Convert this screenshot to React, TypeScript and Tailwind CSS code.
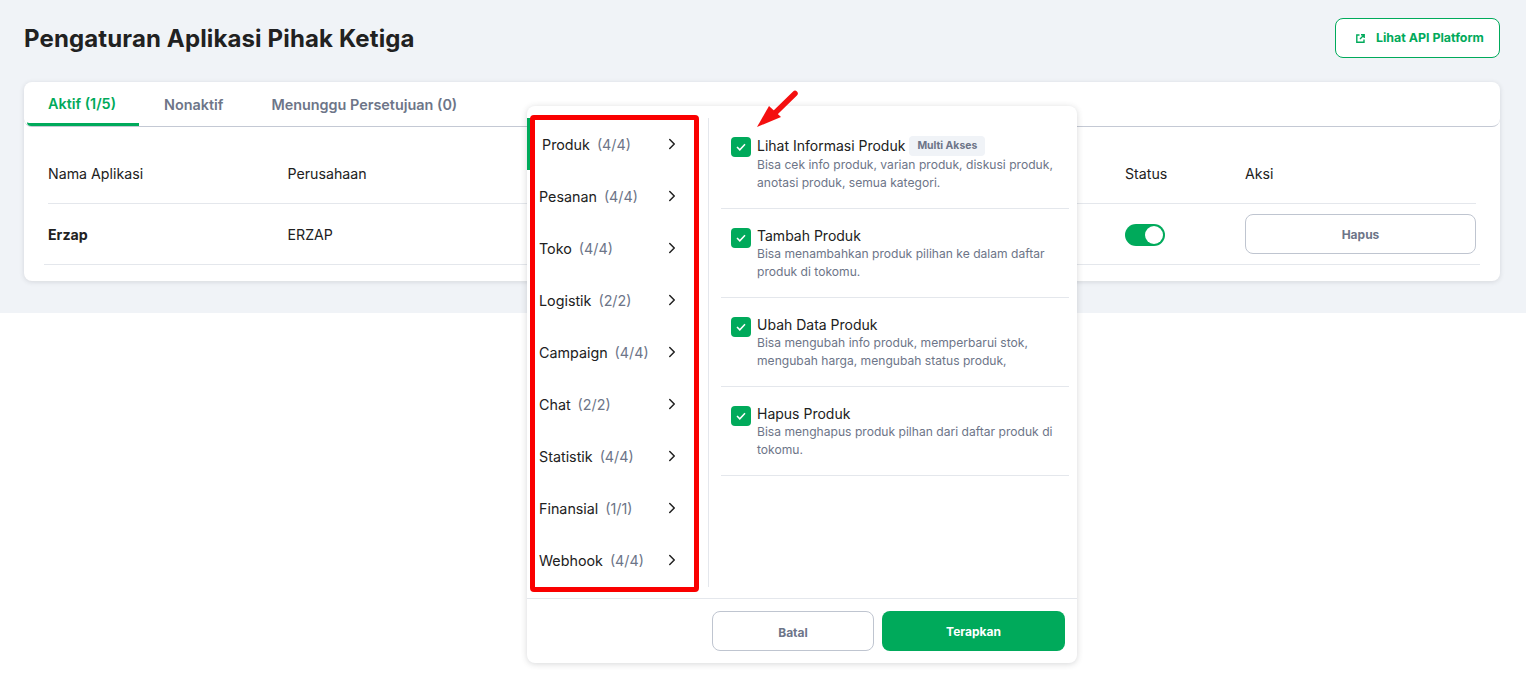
import React from 'react';
import {ChevronRight} from 'lucide-react';

const menus = [
    {title: "Produk", count: "(4/4)", active: true},
    {title: "Pesanan", count: "(4/4)"},
    {title: "Toko", count: "(4/4)"},
    {title: "Logistik", count: "(2/2)"},
    {title: "Campaign", count: "(4/4)"},
    {title: "Chat", count: "(2/2)"},
    {title: "Statistik", count: "(4/4)"},
    {title: "Finansial", count: "(1/1)"},
    {title: "Webhook", count: "(4/4)"},
];

const permissions = [
    {title: "Lihat Informasi Produk", badge: true, desc: ["Bisa cek info produk, varian produk, diskusi produk,", "anotasi produk, semua kategori."]},
    {title: "Tambah Produk", desc: ["Bisa menambahkan produk pilihan ke dalam daftar", "produk di tokomu."]},
    {title: "Ubah Data Produk", desc: ["Bisa mengubah info produk, memperbarui stok,", "mengubah harga, mengubah status produk,"]},
    {title: "Hapus Produk", desc: ["Bisa menghapus produk pilhan dari daftar produk di", "tokomu."]},
];

const App = () => {
    return (
        <div className="relative min-h-[689px] bg-white font-['Inter',sans-serif] text-[#212121]">
            <div className="h-[313px] bg-[#f0f3f7] pt-[18px] pr-[26px] pl-6">
                <div className="flex h-10 items-center justify-between">
                    <h1 className="pt-[1px] text-[24px] font-bold tracking-[0.13px]">Pengaturan Aplikasi Pihak Ketiga</h1>
                    <button className="flex h-10 w-[165px] items-center gap-[11px] rounded-lg border border-[#00aa5b] bg-white pt-[1px] pl-5 text-[12.4px] font-bold text-[#00aa5b]">
                        <svg className="-mt-[1px]" width="9" height="9" viewBox="0 0 9 9" fill="none" stroke="#00aa5b" strokeWidth="1.4">
                            <path d="M3.5 1H.8v7.2H8V5.5" />
                            <path d="M5 .8h3.2V4M8 1 4 5" />
                        </svg>
                        Lihat API Platform
                    </button>
                </div>
                <div className="mt-6 h-[199px] rounded-lg bg-white shadow-[0_1px_5px_rgba(49,53,59,0.14)]">
                    <div className="flex h-[45px] rounded-b-lg border-b border-[#c4c9d4] pl-[3px] text-[14.4px] font-semibold text-[#6d7588]">
                        <div className="flex h-[44px] w-[112px] items-center justify-center rounded-bl-sm border-b-[3px] border-[#00aa5b] pt-[3px] pr-[2px] text-[#00aa5b]">Aktif (1/5)</div>
                        <div className="ml-[25px] flex h-[44px] items-center pt-[1px]">Nonaktif</div>
                        <div className="ml-[48px] flex h-[44px] items-center pt-[1px]">Menunggu Persetujuan (0)</div>
                    </div>
                    <div className="px-5 text-[14.2px]">
                        <div className="mx-1 flex h-[77px] items-center border-b border-[#e4e7ec] pt-[18px]">
                            <div className="w-[239.5px]">Nama Aplikasi</div>
                            <div className="w-[837.5px]">Perusahaan</div>
                            <div className="w-[120px]">Status</div>
                            <div>Aksi</div>
                        </div>
                        <div className="flex h-[61px] items-center border-b border-[#e4e7ec] pl-1 pr-1">
                            <div className="w-[239.5px] pt-[2px] font-bold">Erzap</div>
                            <div className="w-[837.5px] pt-[2px]">ERZAP</div>
                            <div className="w-[120px]">
                                <div className="mt-[2px] flex h-[22px] w-10 items-center justify-end rounded-full bg-[#00aa5b] pr-[2px]">
                                    <div className="h-[18px] w-[18px] rounded-full bg-white" />
                                </div>
                            </div>
                            <button className="h-10 w-[231px] rounded-lg border border-[#bfc5d0] bg-white pt-[2px] text-[12px] font-bold text-[#6d7588]">Hapus</button>
                        </div>
                    </div>
                </div>
            </div>

            {/* modal */}
            <div className="absolute top-[106px] left-[527px] flex h-[557px] w-[550px] flex-col rounded-lg bg-white shadow-[0_1px_6px_rgba(49,53,59,0.2)]">
                <div className="flex h-[492px] pt-3">
                    <div className="h-[469px] w-[182px] border-r border-[#e4e7ec]">
                        {menus.map((menu) => (
                            <div key={menu.title} className={`flex h-[52px] items-center justify-between pr-[27px] text-[14.3px] ${menu.active ? "border-l-4 border-[#00aa5b] pl-[11px]" : "pl-3"}`}>
                                <div className="flex gap-[7px] pt-[2px]">
                                    <span>{menu.title}</span>
                                    <span className="text-[#6d7588]">{menu.count}</span>
                                </div>
                                <ChevronRight size={18} strokeWidth={2} />
                            </div>
                        ))}
                    </div>
                    <div className="ml-3 w-[348px] pt-[2px]">
                        {permissions.map((item) => (
                            <div key={item.title} className="flex h-[89px] gap-[6px] border-b border-[#e4e7ec] pt-[17px] pl-[10px]">
                                <div className={`flex h-5 w-5 shrink-0 items-center justify-center rounded-[4px] bg-[#00aa5b] ${item.badge ? "" : "mt-[2px]"}`}>
                                    <svg width="10" height="8" viewBox="0 0 10 8" fill="none" stroke="white" strokeWidth="1.5">
                                        <path d="M1 4l2.8 2.8L9 1.2" />
                                    </svg>
                                </div>
                                <div>
                                    <div className={`flex h-[19px] items-center text-[14px] ${item.badge ? "-mt-[1px] mb-[1px]" : ""}`}>
                                        {item.title}
                                        {item.badge && <span className="ml-1 flex h-5 items-center rounded bg-[#f0f3f7] px-2 text-[10.4px] font-bold text-[#6d7588]">Multi Akses</span>}
                                    </div>
                                    {item.desc.map((line) => (
                                        <div key={line} className="text-[12.1px] leading-[18px] text-[#6d7588]">{line}</div>
                                    ))}
                                </div>
                            </div>
                        ))}
                    </div>
                </div>
                <div className="flex flex-1 items-start justify-end gap-2 border-t border-[#e4e7ec] pt-3 pr-3">
                    <button className="h-10 w-[162px] rounded-lg border border-[#bfc5d0] bg-white pt-[3px] text-[12px] font-bold text-[#6d7588]">Batal</button>
                    <button className="h-10 w-[183px] rounded-lg bg-[#00aa5b] pt-[1px] text-[12px] font-bold text-white">Terapkan</button>
                </div>
            </div>

            {/* red annotation over the modal */}
            <div className="absolute top-[115px] left-[530px] h-[477px] w-[169px] rounded-sm border-[5px] border-[#fa0000]" />
            <svg className="absolute top-[88px] left-[752px]" width="50" height="44" viewBox="0 0 50 44" fill="none">
                <path d="M43 5.5 23 25" stroke="#f40f0f" strokeWidth="5.5" strokeLinecap="round" />
                <path d="M5 39 17 18 29 29Z" fill="#f40f0f" />
            </svg>
        </div>
    );
};

export default App;
